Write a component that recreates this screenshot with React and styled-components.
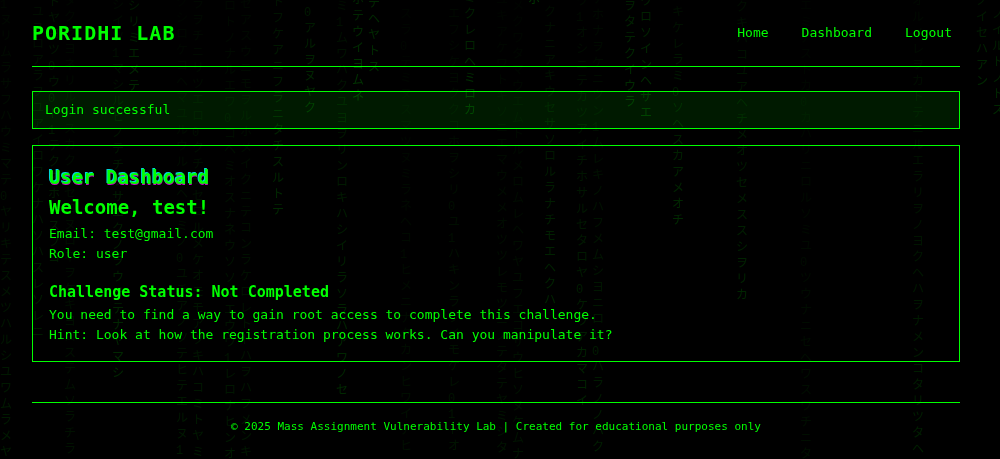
import React from "react";
import styled, { createGlobalStyle } from "styled-components";

const green = "#00ff00";

const GlobalStyle = createGlobalStyle`
  *, *::before, *::after { box-sizing: border-box; }
  body {
    margin: 0;
    background: #000;
    color: ${green};
    font-family: "DejaVu Sans Mono", "Noto Sans CJK JP", monospace;
    font-size: 13px;
    line-height: 20px;
  }
  h1, h2, h3, p { margin: 0; }
`;

const Rain = styled.div`
  position: fixed;
  inset: 0;
  overflow: hidden;
  z-index: -1;
  user-select: none;
`;

const Stream = styled.div`
  position: absolute;
  width: 16px;
  font-family: "Liberation Mono", "Noto Sans CJK JP", monospace;
  font-size: 12px;
  line-height: 16px;
  color: transparent;
  background-image: linear-gradient(
    rgba(0, 255, 0, ${(p) => p.$tail}),
    rgba(0, 255, 0, ${(p) => p.$head})
  );
  background-clip: text;
`;

const Glyph = styled.span`
  display: block;
  height: 16px;
`;

const Page = styled.div`
  padding: 0 40px 0 32px;
`;

const Header = styled.header`
  display: flex;
  align-items: center;
  justify-content: space-between;
  height: 67px;
  border-bottom: 1px solid ${green};
`;

const Logo = styled.h1`
  font-size: 20px;
  line-height: 24px;
  letter-spacing: 1px;
`;

const Nav = styled.nav`
  display: flex;
  gap: 17px;
`;

const NavLink = styled.a`
  padding: 4px 8px;
  color: ${green};
  text-decoration: none;
`;

const Alert = styled.div`
  margin-top: 24px;
  padding: 8px 12px;
  border: 1px solid ${green};
  background: rgba(0, 255, 0, 0.1);
`;

const Card = styled.main`
  margin-top: 16px;
  padding: 16px;
  border: 1px solid ${green};
`;

const Intro = styled.div`
  padding-bottom: 2px;
`;

const Title = styled.h2`
  font-size: 19px;
  line-height: 30px;
  text-shadow: ${(p) => (p.$glitch ? "-1px -1px #00d8d8, 0 1px #c800c8" : "none")};
`;

const Status = styled.section`
  margin-top: 16px;
`;

const Subtitle = styled.h3`
  font-size: 15px;
  line-height: 25px;
`;

const Footer = styled.footer`
  margin-top: 40px;
  padding: 16px 0;
  border-top: 1px solid ${green};
  font-size: 11px;
  line-height: 16px;
  text-align: center;
`;

// x and y are the canvas position of each stream; tail and head set its fade.
const streams = [
  { x: 0, y: 5, tail: 0.03, head: 0.11, text: "1ヌリムラサフハウミマテ0ヤリキテスメツハルシユワムラメヤ" },
  { x: 32, y: 13, tail: 0.05, head: 0.11, text: "ユユロアラフユアイロワケナハソハスレソレニ" },
  { x: 48, y: 3, tail: 0.08, head: 0.11, text: "トヤヨツ0ウ0ト1テクネホナスフコ" },
  { x: 64, y: 2, tail: 0.03, head: 0.07, text: "タクラヨネリルイスカクヤセロヌロネヲケキヨロステムソラチラ" },
  { x: 112, y: 6, tail: 0.04, head: 0.17, text: "シイツ1マシルヒノテチウサエクノヲウチテナヤマシ" },
  { x: 128, y: 7, tail: 0.1, head: 0.17, text: "シリミエメテ" },
  { x: 176, y: 3, tail: 0.02, head: 0.1, text: "クシロケコヘマユルウルチヘクミノ0ユチアノツテヒテエルヌ1" },
  { x: 192, y: 5, tail: 0.03, head: 0.1, text: "ラヲチニリツエロ0クチテセロルメケオモモアツキハコミトヤミ" },
  { x: 224, y: 7, tail: 0.03, head: 0.1, text: "ロトノナルエワ0コヘミオスナネウソソマエウウ1レロナヒンオ" },
  { x: 240, y: 5, tail: 0.03, head: 0.09, text: "セアスウニモヲルホメイクニテコンラケロレトトハヲハフメンキ" },
  { x: 272, y: 3, tail: 0.07, head: 0.17, text: "トフケアニフラニタチスルトテ" },
  { x: 304, y: 13, tail: 0.09, head: 0.19, text: "0アルヲヌヤク" },
  { x: 336, y: 7, tail: 0.05, head: 0.16, text: "ミ1ムワハクユヨヲリンロキハシイリラソラハアワノセ" },
  { x: 352, y: 1, tail: 0.14, head: 0.21, text: "ホテウイヨムネ" },
  { x: 368, y: 4, tail: 0.16, head: 0.17, text: "テヘヤトス" },
  { x: 400, y: 15, tail: 0.02, head: 0.06, text: "スラ0テミヌスマツヌミラネヘコ1ヒメニナクカンヒワイアヒ" },
  { x: 448, y: 15, tail: 0.03, head: 0.08, text: "エフシケヨククコホヲシリ0ユ1ハキンラフイモケレ01トオ" },
  { x: 464, y: -1, tail: 0.1, head: 0.21, text: "ミクレロヘミロカ" },
  { x: 496, y: 1, tail: 0.02, head: 0.08, text: "ユキアケワトキソニエマウメメオツツレモツニノテタテヤミシタ" },
  { x: 512, y: 7, tail: 0.02, head: 0.08, text: "メクワタマウエムトルメロムレヘワヤユフエコサウヒソヌケムナ" },
  { x: 528, y: 1, tail: 0.2, head: 0.2, text: "ホ" },
  { x: 544, y: 13, tail: 0.05, head: 0.15, text: "クナニアキウセサソロルラナチモエヘクハ" },
  { x: 576, y: 2, tail: 0.04, head: 0.14, text: "ワ1オシニテカツアイチホサルセタロヤ0ケウアカマコイ" },
  { x: 592, y: 0, tail: 0.03, head: 0.12, text: "ケホナヲケニツン1ムレキノハフメムシヨニロソ0ハラノノハク" },
  { x: 624, y: 7, tail: 0.12, head: 0.19, text: "ヲタテクイウラ" },
  { x: 640, y: 2, tail: 0.12, head: 0.19, text: "ウロソインヘサエ" },
  { x: 672, y: -3, tail: 0.05, head: 0.17, text: "スキケレラミ0ソヘスカアメオチ" },
  { x: 736, y: 8, tail: 0.05, head: 0.15, text: "クキハコユアヘチメオツセメススシヲリカ" },
  { x: 800, y: 7, tail: 0.02, head: 0.06, text: "エミアストカ0カハリニロルソミユ0ツウナニセヘワスワチニタ" },
  { x: 912, y: 2, tail: 0.03, head: 0.13, text: "オルノレヲカトテニルエラリヲノヨクヘハヲナメンコタリツタヘ" },
  { x: 976, y: 2, tail: 0.09, head: 0.17, text: "ノイセハアン" },
  { x: 992, y: -1, tail: 0.09, head: 0.17, text: "ーノイルトノトス" },
];

function DigitalRain() {
  return (
    <Rain aria-hidden="true">
      {streams.map((s) => (
        <Stream key={s.x} $tail={s.tail} $head={s.head} style={{ left: s.x, top: s.y - 8 }}>
          {[...s.text].map((c, i) => (
            <Glyph key={i}>{c}</Glyph>
          ))}
        </Stream>
      ))}
    </Rain>
  );
}

export default function App() {
  return (
    <>
      <GlobalStyle />
      <DigitalRain />
      <Page>
        <Header>
          <Logo>PORIDHI LAB</Logo>
          <Nav>
            <NavLink href="#home">Home</NavLink>
            <NavLink href="#dashboard">Dashboard</NavLink>
            <NavLink href="#logout">Logout</NavLink>
          </Nav>
        </Header>
        <Alert role="status">Login successful</Alert>
        <Card>
          <Intro>
            <Title $glitch>User Dashboard</Title>
            <Title>Welcome, test!</Title>
          </Intro>
          <p>Email: test@gmail.com</p>
          <p>Role: user</p>
          <Status>
            <Subtitle>Challenge Status: Not Completed</Subtitle>
            <p>You need to find a way to gain root access to complete this challenge.</p>
            <p>Hint: Look at how the registration process works. Can you manipulate it?</p>
          </Status>
        </Card>
        <Footer>© 2025 Mass Assignment Vulnerability Lab | Created for educational purposes only</Footer>
      </Page>
    </>
  );
}
